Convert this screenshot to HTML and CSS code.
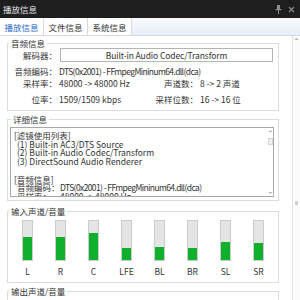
FILE: index.html
```html
<!DOCTYPE html>
<html lang="zh-CN">
<head>
    <meta charset="UTF-8">
    <meta name="viewport" content="width=device-width, initial-scale=1.0">
    <title>播放信息</title>
    <link rel="stylesheet" href="styles.css">
</head>
<body>

<div class="titlebar">
    <span class="title">播放信息</span>
    <span class="title-btns">
        <svg width="7" height="9" viewBox="0 0 7 9">
            <rect x="2" y="0" width="3" height="4" fill="#8c8c8c"/>
            <rect x="0.5" y="4" width="6" height="1.2" fill="#8c8c8c"/>
            <rect x="3" y="5" width="1" height="4" fill="#8c8c8c"/>
        </svg>
        <svg width="7" height="7" viewBox="0 0 7 7">
            <path d="M1 1 L6 6 M6 1 L1 6" stroke="#8c8c8c" stroke-width="1.1"/>
        </svg>
    </span>
</div>

<div class="tabs">
    <div class="tab active">播放信息</div>
    <div class="tab">文件信息</div>
    <div class="tab">系统信息</div>
</div>

<div class="main">
    <div class="content">

        <fieldset class="group audio">
            <legend>音频信息</legend>
            <div class="decoder">
                <span class="label">解码器：</span>
                <div class="decoder-box">Built-in Audio Codec/Transform</div>
            </div>
            <div class="info-row first">
                <span class="label">音频编码：</span>
                <span class="value dll">DTS(0x2001) - FFmpegMininum64.dll(dca)</span>
            </div>
            <div class="info-row pair">
                <span class="label">采样率：</span>
                <span class="value">48000 -&gt; 48000 Hz</span>
                <span class="label">声道数：</span>
                <span class="value">8 -&gt; 2 声道</span>
            </div>
            <div class="info-row pair last">
                <span class="label">位率：</span>
                <span class="value">1509/1509 kbps</span>
                <span class="label">采样位数：</span>
                <span class="value">16 -&gt; 16 位</span>
            </div>
        </fieldset>

        <fieldset class="group detail">
            <legend>详细信息</legend>
            <div class="textbox">
                <div class="textbox-text">
                    <div>[滤镜使用列表]</div>
                    <div class="indent">(1) Built-in AC3/DTS Source</div>
                    <div class="indent">(2) Built-in Audio Codec/Transform</div>
                    <div class="indent">(3) DirectSound Audio Renderer</div>
                    <div>&nbsp;</div>
                    <div>[音频信息]</div>
                    <div class="indent"><span class="tb-label">音频编码：</span><span class="dll">DTS(0x2001) - FFmpegMininum64.dll(dca)</span></div>
                    <div class="indent"><span class="tb-label">采样率：</span>48000 -&gt; 48000 Hz</div>
                </div>
                <div class="textbox-scroll">
                    <svg width="5" height="4" viewBox="0 0 5 4"><path d="M0.5 3 L2.5 1 L4.5 3 Z" fill="#b5b5b5"/></svg>
                    <div class="tb-thumb"></div>
                    <svg class="tb-down" width="5" height="4" viewBox="0 0 5 4"><path d="M0.5 1 L2.5 3 L4.5 1 Z" fill="#b5b5b5"/></svg>
                </div>
            </div>
        </fieldset>

        <fieldset class="group input">
            <legend>输入声道/音量</legend>
            <div class="levels">
                <div class="channel"><div class="meter"><div class="meter-fill" style="height: 60%"></div></div><span class="channel-name">L</span></div>
                <div class="channel"><div class="meter"><div class="meter-fill" style="height: 60%"></div></div><span class="channel-name">R</span></div>
                <div class="channel"><div class="meter"><div class="meter-fill" style="height: 68%"></div></div><span class="channel-name">C</span></div>
                <div class="channel"><div class="meter"><div class="meter-fill" style="height: 30%"></div></div><span class="channel-name">LFE</span></div>
                <div class="channel"><div class="meter"><div class="meter-fill" style="height: 33%"></div></div><span class="channel-name">BL</span></div>
                <div class="channel"><div class="meter"><div class="meter-fill" style="height: 30%"></div></div><span class="channel-name">BR</span></div>
                <div class="channel"><div class="meter"><div class="meter-fill" style="height: 46%"></div></div><span class="channel-name">SL</span></div>
                <div class="channel"><div class="meter"><div class="meter-fill" style="height: 44%"></div></div><span class="channel-name">SR</span></div>
            </div>
        </fieldset>

        <fieldset class="group output">
            <legend>输出声道/音量</legend>
            <div class="levels">
                <div class="channel"><div class="meter"><div class="meter-fill" style="height: 60%"></div></div></div>
                <div class="channel"><div class="meter"><div class="meter-fill" style="height: 60%"></div></div></div>
                <div class="channel"><div class="meter"><div class="meter-fill" style="height: 60%"></div></div></div>
                <div class="channel"><div class="meter"><div class="meter-fill" style="height: 60%"></div></div></div>
            </div>
        </fieldset>

    </div>
    <div class="vscroll">
        <svg width="5" height="4" viewBox="0 0 5 4"><path d="M0.5 3 L2.5 1 L4.5 3 Z" fill="#b0b0b0"/></svg>
        <div class="vthumb"></div>
    </div>
</div>

</body>
</html>
```

FILE: styles.css
```css
body {
    margin: 0;
    width: 300px;
    height: 300px;
    overflow: hidden;
    font-family: "Noto Sans CJK SC", sans-serif;
    font-size: 8.5px;
    color: #333;
    background-color: #fff;
}
.titlebar {
    height: 18px;
    background-color: #1e1e1e;
    color: #e4e4e4;
    display: flex;
    align-items: center;
    padding: 0 5px 0 3px;
}
.title-btns {
    margin-left: auto;
    display: flex;
    align-items: center;
    gap: 6px;
}
.tabs {
    height: 17px;
    display: flex;
    border-bottom: 1px solid #d2dae6;
    background: linear-gradient(#f8fafd, #e7eef8);
}
.tab {
    width: 43px;
    border-right: 1px solid #d9d9d9;
    background-color: #fff;
    display: flex;
    align-items: center;
    justify-content: center;
}
.tab.active {
    color: #2a6bc5;
}
.main {
    display: flex;
    height: 264px;
}
.content {
    flex: 1;
    padding: 2px 13px 0 7px;
    overflow: hidden;
}
.vscroll {
    width: 7px;
    border-left: 1px solid #e3e3e3;
    background-color: #fbfbfb;
    display: flex;
    flex-direction: column;
    align-items: center;
    padding-top: 1px;
}
.vthumb {
    width: 3px;
    height: 4px;
    margin-top: 160px;
    background-color: #d0d0d0;
}
.group {
    margin: 0;
    padding: 0;
    border: 1px solid #dcdcdc;
    min-width: 0;
}
.group legend {
    margin-left: 1px;
    padding: 0 2px;
    line-height: 10px;
}
.audio {
    padding-bottom: 5px;
}
.decoder {
    display: flex;
    align-items: center;
    height: 14px;
}
.decoder .label {
    width: 49px;
    text-align: right;
}
.decoder-box {
    flex: 1;
    height: 14px;
    box-sizing: border-box;
    margin: 0 5px 0 3px;
    border: 1px solid #b4b4b4;
    line-height: 12px;
    text-align: center;
    letter-spacing: -0.1px;
}
.info-row {
    display: grid;
    grid-template-columns: 49px 1fr;
    column-gap: 2px;
    line-height: 12px;
    white-space: nowrap;
}
.info-row.pair {
    grid-template-columns: 49px 88px 49px 1fr;
}
.info-row.first {
    margin-top: 3px;
}
.info-row.last {
    margin-top: 4px;
}
.label {
    text-align: right;
}
.dll {
    letter-spacing: -0.6px;
}
.detail {
    margin-top: 3px;
    padding: 3px 4px 3px 2px;
}
.textbox {
    height: 70px;
    box-sizing: border-box;
    border: 1px solid #a8a8a8;
    display: flex;
}
.textbox-text {
    flex: 1;
    padding: 3px 0 0 3px;
    line-height: 8.7px;
    white-space: nowrap;
    overflow: hidden;
}
.indent {
    padding-left: 3px;
}
.tb-label {
    display: inline-block;
    width: 43px;
}
.textbox-scroll {
    width: 6px;
    display: flex;
    flex-direction: column;
    align-items: center;
    padding: 1px 0;
}
.tb-thumb {
    width: 3px;
    height: 5px;
    margin-top: 5px;
    border: 1px solid #d4d4d4;
    background-color: #f0f0f0;
}
.tb-down {
    margin-top: auto;
}
.input {
    margin-top: 5px;
    padding-bottom: 5px;
}
.output {
    margin-top: 3px;
}
.levels {
    display: flex;
    padding: 4px 0 0 3px;
}
.channel {
    width: 33px;
    display: flex;
    flex-direction: column;
    align-items: center;
}
.meter {
    width: 11px;
    height: 41px;
    box-sizing: border-box;
    border: 1px solid #cccccc;
    background-color: #e4e4e4;
    display: flex;
    align-items: flex-end;
}
.meter-fill {
    width: 100%;
    background-color: #10b02c;
}
.channel-name {
    margin-top: 4px;
    line-height: 12px;
}
```
